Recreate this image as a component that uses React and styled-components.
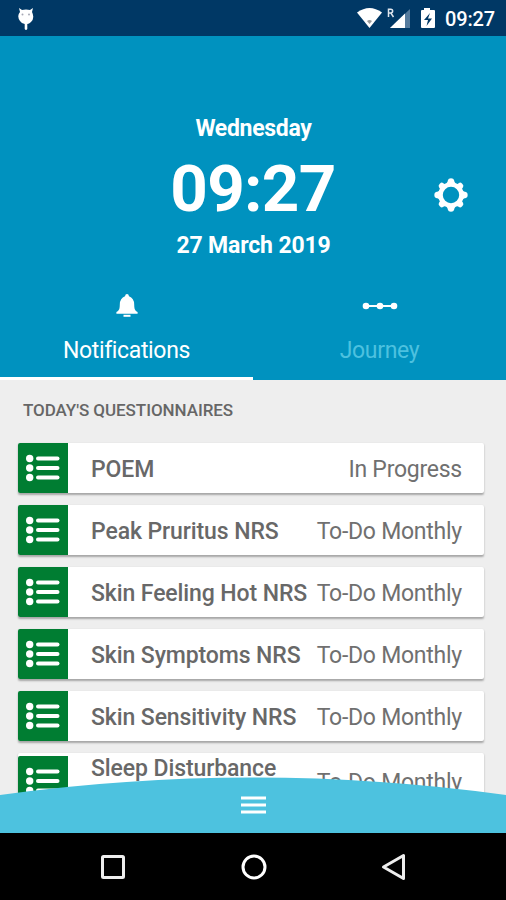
import React from "react";
import styled, { createGlobalStyle } from "styled-components";

const GlobalStyle = createGlobalStyle`
  * { box-sizing: border-box; }
  body { margin: 0; font-family: Roboto, "Liberation Sans", sans-serif; }
`;

const Screen = styled.div`
  width: 506px;
  height: 900px;
  display: flex;
  flex-direction: column;
  overflow: hidden;
  background: #eeeeee;
`;

const StatusBar = styled.div`
  flex: none;
  height: 36px;
  padding: 0 11px 0 17px;
  display: flex;
  align-items: center;
  background: #003865;
  color: #fff;
  svg { display: block; }
`;

const StatusIcons = styled.div`
  margin-left: auto;
  display: flex;
  align-items: center;
`;

const StatusTime = styled.span`
  margin-left: 8px;
  width: 50px;
  font-size: 20px;
  font-weight: 500;
  letter-spacing: -0.15px;
  line-height: 36px;
  padding-top: 2px;
  white-space: nowrap;
`;

const Header = styled.header`
  flex: none;
  height: 344px;
  display: flex;
  flex-direction: column;
  background: #0092bf;
  color: #fff;
`;

const Clock = styled.div`
  height: 247px;
  padding-top: 78px;
  display: grid;
  grid-template-columns: 100px 1fr 100px;
  grid-template-rows: 28px 89px 28px;
  justify-items: center;
  align-items: center;
`;

const DateLine = styled.div`
  grid-column: 2;
  font-size: 23px;
  font-weight: 700;
  letter-spacing: ${(p) => p.$spacing || "0"};
  margin-left: 1px;
  white-space: nowrap;
`;

const Time = styled.div`
  grid-column: 2;
  padding-top: 5px;
  font-size: 65.5px;
  font-weight: 700;
  letter-spacing: -0.7px;
  line-height: 84px;
`;

const SettingsButton = styled.button`
  grid-column: 3;
  grid-row: 2;
  border: 0;
  padding: 0;
  margin: 17px 0 0 -11px;
  background: none;
  color: #fff;
  svg { display: block; }
`;

const Tabs = styled.nav`
  flex: 1;
  display: grid;
  grid-template-columns: 1fr 1fr;
`;

const Tab = styled.div`
  display: flex;
  flex-direction: column;
  align-items: center;
  padding-top: 8px;
  border-bottom: 3px solid ${(p) => (p.$active ? "#fff" : "transparent")};
  color: ${(p) => (p.$active ? "#fff" : "#4dc1df")};
  font-size: 23px;
  letter-spacing: -0.35px;
  line-height: 28px;
  svg { display: block; margin-bottom: 16px; }
`;

const Content = styled.main`
  height: 453px;
  flex: none;
  overflow: hidden;
  padding: 16px 22px 0 18px;
`;

const SectionTitle = styled.h2`
  margin: 0 0 20px 5px;
  height: 27px;
  font-size: 17px;
  font-weight: 500;
  letter-spacing: -0.06px;
  line-height: 28px;
  color: #666;
`;

const List = styled.div`
  display: flex;
  flex-direction: column;
  gap: 12px;
`;

const Card = styled.div`
  flex: none;
  min-height: 50px;
  display: flex;
  align-items: center;
  border-radius: 2px;
  background: #fff;
  box-shadow: 0 1.5px 2px rgba(0, 0, 0, 0.3);
`;

const IconTile = styled.div`
  width: 50px;
  height: 50px;
  flex: none;
  border-radius: 2px 0 0 2px;
  background: #007d32;
  svg { display: block; }
`;

const CardTitle = styled.div`
  margin-left: 23px;
  width: ${(p) => (p.$narrow ? "200px" : "auto")};
  font-size: 23px;
  font-weight: 500;
  letter-spacing: -0.1px;
  line-height: 27px;
  color: #686868;
  padding-top: 2px;
`;

const CardStatus = styled.div`
  margin-left: auto;
  margin-right: 22px;
  font-size: 23px;
  letter-spacing: -0.25px;
  line-height: 27px;
  padding-top: 2px;
  color: #707070;
  white-space: nowrap;
`;

const BottomMenu = styled.div`
  flex: none;
  position: relative;
  height: 56px;
  margin-top: -56px;
  svg { display: block; }
`;

const NavBar = styled.footer`
  flex: none;
  height: 67px;
  padding-left: 1px;
  display: flex;
  justify-content: center;
  align-items: center;
  gap: 112.5px;
  background: #000;
  svg { display: block; }
`;

const DebugIcon = () => (
  <svg width="18" height="26" viewBox="0 0 18 26">
    <path d="M2 3 5 5Q9 4 13 5L16 3 15 7Q18 13 14 17Q12 19 10.300 19V24Q9 26 7.700 24V19Q5 19 3 16Q-.5 11 3 7Z" fill="#fff" />
    <circle cx="5.500" cy="9.500" r="1" fill="#a7a9b5" />
    <circle cx="12" cy="9.500" r="1" fill="#a7a9b5" />
  </svg>
);

const SignalIcons = () => (
  <svg width="80" height="28" viewBox="0 0 80 28" fill="#fff">
    <path d="M0 8.500Q12.500-.5 25 8.500L12.500 24Z" />
    <path d="M10 17Q12.500 15 15 17L12.500 20Z" fill="#999" />
    <path d="M31.500 13V5.200h2.300a1.800 1.800 0 0 1 0 3.700H31.500m2.200 0L36.500 13" fill="none" stroke="#dfe6ee" strokeWidth="1.500" />
    <path d="M53 5V24H33Z" fill="#557b9d" />
    <path d="M48 9.500V24H33Z" />
    <path d="M67 4h6v2h4q1 0 1 1v16q0 1-1 1H65q-1 0-1-1V7q0-1 1-1h2Z" />
    <path d="M73 9 67 16h4l-1.500 6 5.500-7.500h-4Z" fill="#003865" />
  </svg>
);

const teeth = [0, 45, 90, 135, 180, 225, 270, 315];

const GearIcon = () => (
  <svg width="34" height="34" viewBox="-17 -17 34 34">
    <circle r="10.500" fill="none" stroke="currentColor" strokeWidth="4.600" />
    {teeth.map((angle) => (
      <path key={angle} d="M-4.800-11.500Q-3.300-12.500-3-15Q-2.700-16.700 0-16.700T3-15Q3.300-12.500 4.800-11.500Z" fill="currentColor" transform={`rotate(${angle}) scale(${angle % 90 ? 0.95 : 1})`} />
    ))}
  </svg>
);

const BellIcon = () => (
  <svg width="24" height="30" viewBox="0 0 24 30" fill="#fff">
    <path d="M12 3q1.700 0 2 2.300Q19 7 19.200 13.500C19.300 18.500 20 19.500 22.600 21V22.800H1.400V21C4 19.500 4.700 18.500 4.800 13.500Q5 7 10 5.300 10.300 3 12 3Z" />
    <path d="M8.500 23.800h7v2h-7Z" />
  </svg>
);

const JourneyIcon = () => (
  <svg width="36" height="30" viewBox="0 0 36 30" fill="#fff">
    <path d="M4 14h28v2H4Z" />
    <circle cx="4" cy="15" r="3.300" /><circle cx="18" cy="15" r="3.300" /><circle cx="32" cy="15" r="3.300" />
  </svg>
);

const ListIcon = () => (
  <svg width="50" height="50" viewBox="0 0 50 50" fill="#fff">
    {[15.5, 25, 34.5].map((y) => (
      <g key={y}>
        <circle cx="11.700" cy={y} r="3.700" />
        <path d={`M20 ${y}H39.500`} stroke="#fff" strokeWidth="4" strokeLinecap="round" />
      </g>
    ))}
  </svg>
);

const items = [
  { title: "POEM", status: "In Progress" },
  { title: "Peak Pruritus NRS", status: "To-Do Monthly" },
  { title: "Skin Feeling Hot NRS", status: "To-Do Monthly" },
  { title: "Skin Symptoms NRS", status: "To-Do Monthly" },
  { title: "Skin Sensitivity NRS", status: "To-Do Monthly" },
  { title: "Sleep Disturbance NRS", status: "To-Do Monthly", tall: true },
];

export default function App() {
  return (
    <>
      <GlobalStyle />
      <Screen>
        <StatusBar>
          <DebugIcon />
          <StatusIcons>
            <SignalIcons />
            <StatusTime>09:27</StatusTime>
          </StatusIcons>
        </StatusBar>
        <Header>
          <Clock>
            <DateLine $spacing="-0.3px">Wednesday</DateLine>
            <Time>09:27</Time>
            <DateLine $spacing="-0.15px">27 March 2019</DateLine>
            <SettingsButton aria-label="Settings"><GearIcon /></SettingsButton>
          </Clock>
          <Tabs>
            <Tab $active><BellIcon />Notifications</Tab>
            <Tab><JourneyIcon />Journey</Tab>
          </Tabs>
        </Header>
        <Content>
          <SectionTitle>TODAY'S QUESTIONNAIRES</SectionTitle>
          <List>
            {items.map(({ title, status, tall }) => (
              <Card key={title}>
                <IconTile><ListIcon /></IconTile>
                <CardTitle $narrow={tall}>{title}</CardTitle>
                <CardStatus>{status}</CardStatus>
              </Card>
            ))}
          </List>
        </Content>
        <BottomMenu>
          <svg width="506" height="56" viewBox="0 0 506 56">
            <path d="M0 18Q253-17 506 18V56H0Z" fill="#4dc2df" />
            <path d="M241 21h25M241 28h25M241 35h25" stroke="#fff" strokeWidth="3.200" />
          </svg>
        </BottomMenu>
        <NavBar>
          <svg width="28" height="28" viewBox="0 0 28 28" fill="none" stroke="#eee" strokeWidth="3">
            <rect x="3.500" y="3.500" width="21" height="21" rx="1" />
          </svg>
          <svg width="28" height="28" viewBox="0 0 28 28" fill="none" stroke="#fff" strokeWidth="3">
            <circle cx="14" cy="14" r="11" />
          </svg>
          <svg width="28" height="28" viewBox="0 0 28 28" fill="none" stroke="#eee" strokeWidth="3" strokeLinejoin="round">
            <path d="M23.500 2.500v23L3.500 14Z" />
          </svg>
        </NavBar>
      </Screen>
    </>
  );
}
